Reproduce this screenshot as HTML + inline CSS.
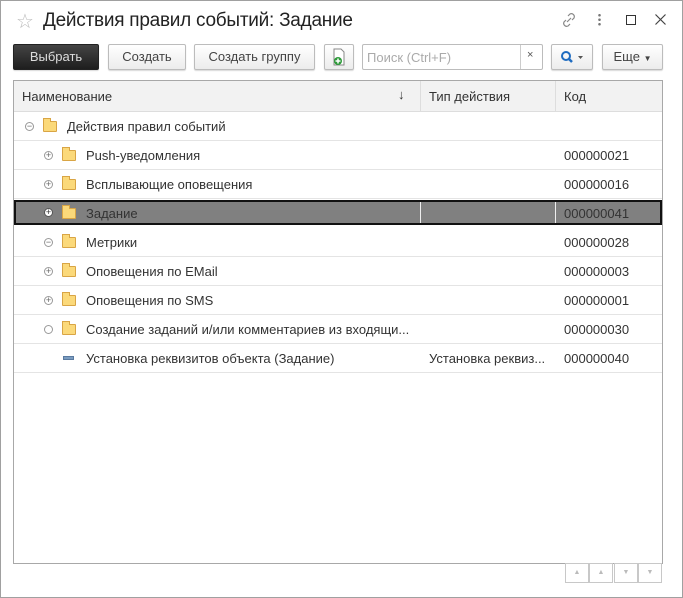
<!DOCTYPE html>
<html><head><meta charset="utf-8"><style>
*{box-sizing:border-box;margin:0;padding:0}
body{width:683px;height:598px;background:#fff;font-family:"Liberation Sans",Arial,sans-serif;font-size:13px;color:#333;position:relative;overflow:hidden}
.win{position:absolute;left:0;top:0;width:683px;height:598px;border:1px solid #a0a0a0}
.abs{position:absolute}
.btn{position:absolute;top:44px;height:26px;border:1px solid #bcbcbc;border-radius:2px;background:linear-gradient(#fff,#ececec);box-shadow:0 1px 1px rgba(0,0,0,.15);font-size:13px;color:#444;text-align:center;line-height:24px}
.tbl{position:absolute;left:13px;top:80px;width:650px;height:484px;border:1px solid #a8a8a8}
.hdr{position:absolute;left:0;top:0;width:648px;height:31px;background:#f2f2f2;border-bottom:1px solid #ddd}
.row{position:absolute;left:0;width:648px;height:29px;border-bottom:1px solid #e4e4e4}
.t{position:absolute;top:7px;white-space:nowrap}
.fold{position:absolute;top:9px;width:14px;height:11px;background:#fbd97a;border:1px solid #d9a545;border-radius:1px}
.fold:before{content:"";position:absolute;left:-1px;top:-4px;width:6px;height:3px;background:#fbd97a;border:1px solid #d9a545;border-bottom:none}
.pm{position:absolute;top:10px;width:9px;height:9px;border:1px solid #999;border-radius:50%;font-size:9px;line-height:7px;text-align:center;color:#666}
.sb{position:absolute;top:563px;width:24px;height:20px;border:1px solid #c8c8c8;background:#fff;color:#bbb;font-size:7px;text-align:center;line-height:18px}
</style></head><body>
<div class="win"></div>
<div class="abs" style="left:16px;top:9px;font-size:20px;color:#bbb">☆</div>
<div class="abs" style="left:43px;top:10px;font-size:19px;color:#222;letter-spacing:-0.25px">Действия правил событий: Задание</div>
<svg class="abs" style="left:560px;top:11px" width="18" height="18" viewBox="0 0 18 18"><path d="M7 11l4-4M8 5l2-2a3 3 0 014 4l-2 2M10 13l-2 2a3 3 0 01-4-4l2-2" stroke="#888" fill="none" stroke-width="1.2"/></svg>
<div class="abs" style="left:598px;top:13px;width:3px;height:13px;background:radial-gradient(circle,#777 1.2px,transparent 1.4px) 0 0/3px 4.5px"></div>
<div class="abs" style="left:626px;top:15px;width:10px;height:10px;border:1.5px solid #333"></div>
<svg class="abs" style="left:655px;top:14px" width="11" height="11" viewBox="0 0 11 11"><path d="M0.5 0.5l10 10M10.5 0.5l-10 10" stroke="#444" stroke-width="1.2"/></svg>

<div class="btn" style="left:13px;width:86px;background:linear-gradient(#444,#1e1e1e);border-color:#222;color:#ddd">Выбрать</div>
<div class="btn" style="left:108px;width:78px">Создать</div>
<div class="btn" style="left:194px;width:121px">Создать группу</div>
<div class="btn" style="left:324px;width:30px"><svg width="14" height="18" viewBox="0 0 14 18" style="margin-top:3px"><path d="M2 1h7l3 3v13H2z" fill="#fff" stroke="#888"/><circle cx="6" cy="13" r="4" fill="#2e9b3a"/><path d="M6 10.5v5M3.5 13h5" stroke="#fff" stroke-width="1.5"/></svg></div>
<div class="abs" style="left:362px;top:44px;width:181px;height:26px;border:1px solid #bcbcbc;border-radius:2px"></div>
<div class="abs" style="left:367px;top:50px;color:#aaa;font-size:13px">Поиск (Ctrl+F)</div>
<div class="abs" style="left:520px;top:45px;width:1px;height:24px;background:#ccc"></div>
<div class="abs" style="left:527px;top:49px;font-size:11px;color:#555">×</div>
<div class="btn" style="left:551px;width:42px"><svg width="24" height="14" viewBox="0 0 24 14" style="margin-top:5px"><circle cx="6" cy="6" r="4" stroke="#1f6cc0" stroke-width="2" fill="none"/><path d="M9 9l3 3" stroke="#1f6cc0" stroke-width="2.5"/><path d="M18 6h5l-2.5 3z" fill="#555"/></svg></div>
<div class="btn" style="left:602px;width:61px">Еще <span style="font-size:8px">▼</span></div>

<div class="tbl">
<div class="hdr">
<div class="t" style="left:8px;top:8px">Наименование</div>
<div class="t" style="left:384px;top:6px">↓</div>
<div class="abs" style="left:406px;top:0;width:1px;height:31px;background:#ddd"></div>
<div class="t" style="left:415px;top:8px">Тип действия</div>
<div class="abs" style="left:541px;top:0;width:1px;height:31px;background:#ddd"></div>
<div class="t" style="left:550px;top:8px">Код</div>
</div>
<div class="row" style="top:31px"><div class="pm" style="left:11px">−</div><div class="fold" style="left:29px"></div><div class="t" style="left:53px">Действия правил событий</div></div>
<div class="row" style="top:60px"><div class="pm" style="left:30px">+</div><div class="fold" style="left:48px"></div><div class="t" style="left:72px">Push-уведомления</div><div class="t" style="left:550px">000000021</div></div>
<div class="row" style="top:89px"><div class="pm" style="left:30px">+</div><div class="fold" style="left:48px"></div><div class="t" style="left:72px">Всплывающие оповещения</div><div class="t" style="left:550px">000000016</div></div>
<div class="row" style="top:119px;left:0;height:25px;background:#808080;border:2px solid #111"><div class="pm" style="left:28px;top:6px;background:#fff;border-color:#555;color:#333">+</div><div class="fold" style="left:46px;top:6px"></div><div class="t" style="left:70px;top:4px;color:#333">Задание</div><div class="abs" style="left:404px;top:0;width:1px;height:21px;background:#eee"></div><div class="abs" style="left:539px;top:0;width:1px;height:21px;background:#eee"></div><div class="t" style="left:548px;top:4px;color:#333">000000041</div></div>
<div class="row" style="top:147px"><div class="pm" style="left:30px">−</div><div class="fold" style="left:48px"></div><div class="t" style="left:72px">Метрики</div><div class="t" style="left:550px">000000028</div></div>
<div class="row" style="top:176px"><div class="pm" style="left:30px">+</div><div class="fold" style="left:48px"></div><div class="t" style="left:72px">Оповещения по EMail</div><div class="t" style="left:550px">000000003</div></div>
<div class="row" style="top:205px"><div class="pm" style="left:30px">+</div><div class="fold" style="left:48px"></div><div class="t" style="left:72px">Оповещения по SMS</div><div class="t" style="left:550px">000000001</div></div>
<div class="row" style="top:234px"><div class="pm" style="left:30px"></div><div class="fold" style="left:48px"></div><div class="t" style="left:72px">Создание заданий и/или комментариев из входящи...</div><div class="t" style="left:550px">000000030</div></div>
<div class="row" style="top:263px"><div class="abs" style="left:49px;top:12px;width:11px;height:4px;background:#7a9cc0;border:1px solid #5a7aa0"></div><div class="t" style="left:72px">Установка реквизитов объекта (Задание)</div><div class="t" style="left:415px">Установка реквиз...</div><div class="t" style="left:550px">000000040</div></div>
</div>
<div class="sb" style="left:565px">▲</div><div class="sb" style="left:589px">▲</div><div class="sb" style="left:614px">▼</div><div class="sb" style="left:638px">▼</div>
</body></html>
